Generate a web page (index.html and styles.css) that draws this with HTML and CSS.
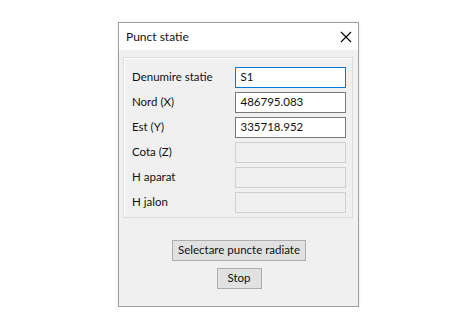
FILE: index.html
```html
<!DOCTYPE html>
<html lang="ro">
<head>
  <meta charset="UTF-8">
  <title>Punct statie</title>
  <link rel="stylesheet" href="styles.css">
</head>
<body>
<div class="dialog">
  <div class="titleBar">
    <span class="title">Punct statie</span>
    <span class="close">
      <svg width="12" height="12" viewBox="0 0 12 12"><path d="M1 1 L11 11 M11 1 L1 11" stroke="#000" stroke-width="1.1" fill="none"/></svg>
    </span>
  </div>
  <div class="dialogBody">
    <div class="group">
      <div class="row"><label>Denumire statie</label><div class="field focus">S1</div></div>
      <div class="row"><label>Nord (X)</label><div class="field">486795.083</div></div>
      <div class="row"><label>Est (Y)</label><div class="field">335718.952</div></div>
      <div class="row"><label>Cota (Z)</label><div class="field disabled"></div></div>
      <div class="row"><label>H aparat</label><div class="field disabled"></div></div>
      <div class="row"><label>H jalon</label><div class="field disabled"></div></div>
    </div>
    <div class="buttons">
      <div class="btn">Selectare puncte radiate</div>
      <div class="btn narrow">Stop</div>
    </div>
  </div>
</div>
</body>
</html>
```

FILE: styles.css
```css
body {
  margin: 0;
  background-color: #fff;
  font-family: Lato, "Noto Sans", sans-serif;
  font-size: 11.5px;
  color: #111;
}

.dialog {
  margin: 22px 0 0 118px;
  width: 239px;
  height: 283px;
  border: 1px solid #a0a0a0;
  background-color: #f0f0f0;
  box-shadow: 0 0 3px rgba(0, 0, 0, 0.12);
  display: flex;
  flex-direction: column;
}

.titleBar {
  height: 27px;
  background-color: #fff;
  display: flex;
  align-items: center;
  justify-content: space-between;
  padding: 0 6px 0 7px;
}

.titleBar .title {
  font-size: 12px;
  margin-top: -1px;
}

.titleBar .close {
  width: 12px;
  height: 12px;
  display: flex;
}

.dialogBody {
  padding: 7px 5px 0 4px;
  display: flex;
  flex-direction: column;
}

.group {
  height: 150px;
  border: 1px solid #dcdcdc;
  box-shadow: inset 1px 1px 0 #fff;
  padding: 9px 6px 0 8px;
  display: flex;
  flex-direction: column;
  gap: 4px;
}

.row {
  display: flex;
  align-items: center;
  height: 21px;
}

.row label {
  width: 103px;
  margin-top: -2px;
  white-space: nowrap;
}

.field {
  width: 105px;
  height: 19px;
  line-height: 18px;
  border: 1px solid #7a7a7a;
  background-color: #fff;
  padding-left: 5px;
}

.field.focus {
  border-color: #0078d7;
}

.field.disabled {
  border-color: #cfcfcf;
  background-color: #f0f0f0;
}

.buttons {
  display: flex;
  flex-direction: column;
  align-items: center;
  gap: 7px;
  padding: 22px 0 0 2px;
}

.btn {
  height: 19px;
  line-height: 18px;
  border: 1px solid #adadad;
  background-color: #e1e1e1;
  text-align: center;
  white-space: nowrap;
  width: 132px;
}

.btn.narrow {
  width: 43px;
}
```
